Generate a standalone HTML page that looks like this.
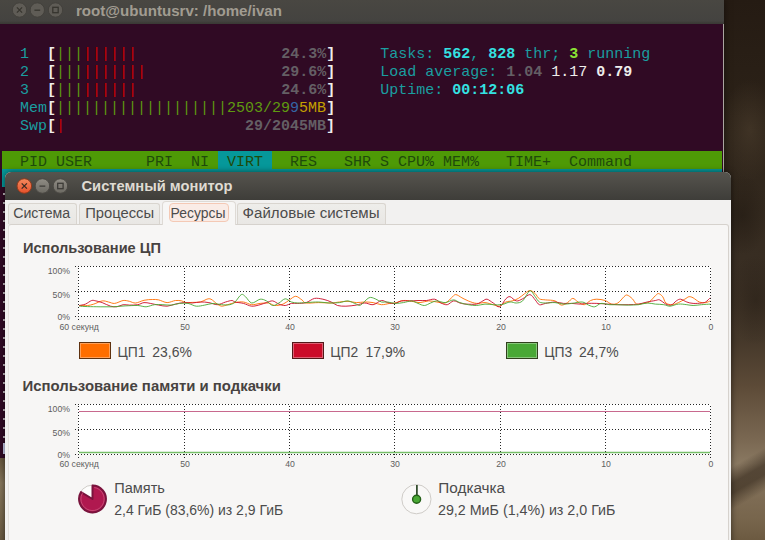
<!DOCTYPE html>
<html lang="ru">
<head>
<meta charset="utf-8">
<title>Системный монитор</title>
<style>
html,body{margin:0;padding:0;}
body{width:765px;height:540px;overflow:hidden;position:relative;font-family:"Liberation Sans",sans-serif;
 background:
  linear-gradient(150deg,transparent 0,transparent 90.6%,rgba(50,38,26,.6) 92.3%,rgba(50,38,26,.6) 93.3%,transparent 95%,transparent 100%),
  radial-gradient(30px 50px at 750px 130px,rgba(85,70,52,.45),transparent),
  radial-gradient(26px 40px at 742px 215px,rgba(30,22,15,.5),transparent),
  radial-gradient(30px 45px at 756px 300px,rgba(30,22,15,.4),transparent),
  linear-gradient(180deg,#251b13 0px,#2c2218 120px,#33291e 200px,#392e23 270px,#45382a 340px,#5c4a37 385px,#7a6852 440px,#8a7962 464px,#7d6b53 500px,#77654c 520px,#6c5a41 540px);}
.abs{position:absolute;}
/* ---------- terminal ---------- */
#term{left:0;top:0;width:724px;height:458px;background:#300a24;box-shadow:0 0 7px rgba(0,0,0,.5);}
#ttitle{left:0;top:0;width:724px;height:24px;background:linear-gradient(180deg,#494742 0,#444340 21px,#3b3a36 23px,#3b3a36 24px);}
#ttitle .tt{left:76px;top:2px;font-size:15.1px;font-weight:bold;color:#a19c91;line-height:18px;white-space:nowrap;}
.row{left:2px;height:18px;line-height:24px;font-family:"Liberation Mono",monospace;font-size:15px;white-space:pre;color:#d3d7cf;}
.c{color:#1a9ea0}.C{color:#34e2e2;font-weight:bold}.w{color:#eeeeec;font-weight:bold}.g{color:#5f9a10}.r{color:#cc0000}
.k{color:#645f64;font-weight:bold}.G{color:#8ae234;font-weight:bold}.b{color:#3465a4}.y{color:#c4a000}
.W{color:#eeeeec}
#tdots{left:3px;top:193px;width:2px;height:246px;background:repeating-linear-gradient(180deg,rgba(238,238,236,.75) 0,rgba(238,238,236,.75) 1.6px,transparent 1.6px,transparent 9px);}
#tf1{left:3px;top:443px;width:2px;height:11px;background:#c9cdea;}
#tedge{left:722.5px;top:24px;width:1px;height:149px;background:#aaa6a0;}
/* ---------- system monitor ---------- */
#sm{left:5px;top:172px;width:726px;height:380px;background:#f2f1f0;border-radius:6px 6px 0 0;overflow:hidden;box-shadow:0 0 6px rgba(0,0,0,.55);}
#smt{left:0;top:0;width:726px;height:28px;background:linear-gradient(180deg,#56544e 0,#3e3d39 100%);}
#smt .tt{left:76.5px;top:5px;font-size:14.7px;font-weight:bold;color:#dfdbd2;line-height:18px;white-space:nowrap;}
.ui{color:#4c4c4c;white-space:nowrap;line-height:20px;height:20px;}
#smi{left:-5px;top:-172px;width:765px;height:552px;}
.tab{box-sizing:border-box;border:1px solid #d9d5cf;border-bottom:none;border-radius:3px 3px 0 0;background:linear-gradient(180deg,#eeedea 0,#e9e7e4 100%);}
#pane{left:8px;top:224px;width:721px;height:330px;box-sizing:border-box;border:1px solid #d6d2cd;border-left-color:#e4e1dd;border-radius:3px;background:#f7f6f5;}
#atab{left:162px;top:201px;width:74px;height:24px;box-sizing:border-box;border:1px solid #dedad5;border-bottom:none;border-radius:4px 4px 0 0;background:#f7f6f5;}
#focus{left:169px;top:203px;width:60px;height:19px;box-sizing:border-box;border:1px solid #f4c9b5;border-radius:4px;background:#faece6;}
.sw{width:32px;height:17px;box-sizing:border-box;border:1px solid rgba(40,30,20,.75);box-shadow:inset 0 0 0 1px rgba(255,255,255,.35);}
</style>
</head>
<body>
<div id="term" class="abs">
 <div id="ttitle" class="abs">
  <svg class="abs" style="left:0;top:0" width="80" height="24" viewBox="0 0 80 24">
   <g fill="#5f5c56" stroke="#43413c" stroke-width="1"><circle cx="19.5" cy="10" r="7.2"/><circle cx="37.3" cy="10" r="7.2"/><circle cx="55.5" cy="10" r="7.2"/></g>
   <g fill="none" stroke="#37352f" stroke-width="1.3"><path d="M16.9 7.4L22.1 12.6M22.1 7.4L16.9 12.6"/><path d="M34.4 10.2H40.2"/><rect x="52.8" y="7.3" width="5.4" height="5.4"/></g>
  </svg>
  <div class="abs tt">root@ubuntusrv: /home/ivan</div>
 </div>
 <div class="abs row" style="top:43px;">  <span class="c">1</span>  <span class="w">[</span><span class="g br">|||</span><span class="r br">||||||</span>                <span class="k">24.3%</span><span class="w">]</span>     <span class="c">Tasks: </span><span class="C">562</span><span class="c">, </span><span class="C">828</span><span class="c"> thr; </span><span class="G">3</span><span class="c"> running</span></div>
 <div class="abs row" style="top:61px;">  <span class="c">2</span>  <span class="w">[</span><span class="g br">|||</span><span class="r br">|||||||</span>               <span class="k">29.6%</span><span class="w">]</span>     <span class="c">Load average: </span><span class="k">1.04</span> <span class="W">1.17</span> <span class="w">0.79</span></div>
 <div class="abs row" style="top:79px;">  <span class="c">3</span>  <span class="w">[</span><span class="g br">|||</span><span class="r br">||||||</span>                <span class="k">24.6%</span><span class="w">]</span>     <span class="c">Uptime: </span><span class="C">00:12:06</span></div>
 <div class="abs row" style="top:97px;">  <span class="c">Mem</span><span class="w">[</span><span class="g br">|||||||||||||||||||</span><span class="g">2503/29</span><span class="b">9</span><span class="y">5MB</span><span class="w">]</span></div>
 <div class="abs row" style="top:115px;">  <span class="c">Swp</span><span class="w">[</span><span class="r br">|</span>                    <span class="k">29/2045MB</span><span class="w">]</span></div>
 <div class="abs" style="left:2px;top:151px;width:720px;height:18px;background:#4e9a06"></div><div class="abs" style="left:218px;top:151px;width:54px;height:18px;background:#06989a"></div>
 <div class="abs row" style="top:151px;color:#1f4a0b;">  PID USER      PRI  NI  VIRT   RES   SHR S CPU% MEM%   TIME+  Command</div>
 <div class="abs" style="left:2px;top:169px;width:720px;height:18px;background:#06989a"></div>
 <div class="abs" id="tdots"></div><div class="abs" id="tf1"></div>
 <div class="abs" id="tedge"></div>
</div>
<div class="abs" style="left:0;top:458px;width:8px;height:82px;background:linear-gradient(180deg,#66553c 0,#85755a 25px,#7b6b50 50px,#6a5a42 82px)"></div>
<div id="sm" class="abs">
 <div id="smt" class="abs">
  <svg class="abs" style="left:0;top:0" width="80" height="28" viewBox="0 0 80 28">
   <defs><linearGradient id="gc" x1="0" y1="0" x2="0" y2="1"><stop offset="0" stop-color="#f58a5e"/><stop offset="1" stop-color="#e6502a"/></linearGradient>
   <linearGradient id="gg" x1="0" y1="0" x2="0" y2="1"><stop offset="0" stop-color="#908d85"/><stop offset="1" stop-color="#6b6962"/></linearGradient></defs>
   <circle cx="19.3" cy="14" r="7.3" fill="url(#gc)" stroke="#8f3a1c" stroke-width="1"/>
   <circle cx="37.4" cy="14" r="7.3" fill="url(#gg)" stroke="#4a4843" stroke-width="1"/>
   <circle cx="55.4" cy="14" r="7.3" fill="url(#gg)" stroke="#4a4843" stroke-width="1"/>
   <g fill="none" stroke="#3b2a22" stroke-width="1.3"><path d="M16.7 11.4L21.9 16.6M21.9 11.4L16.7 16.6"/></g>
   <g fill="none" stroke="#3c3b37" stroke-width="1.3"><path d="M34.5 14.2H40.3"/><rect x="52.7" y="11.3" width="5.4" height="5.4"/></g>
  </svg>
  <div class="abs tt">Системный монитор</div></div>
<div class="abs" id="smi">
<div class="abs tab" style="left:8px;top:203px;width:69px;height:21px"></div>
<div class="abs tab" style="left:79px;top:203px;width:81px;height:21px"></div>
<div class="abs tab" style="left:237px;top:203px;width:149px;height:21px"></div>
<div class="abs" id="pane"></div>
<div class="abs" id="atab"></div>
<div class="abs" id="focus"></div>
<div class="abs ui" style="left:13.2px;top:203.3px;font-size:14.15px;">Система</div>
<div class="abs ui" style="left:85.2px;top:203.3px;font-size:14.78px;">Процессы</div>
<div class="abs ui" style="left:170.5px;top:203.3px;font-size:13.95px;">Ресурсы</div>
<div class="abs ui" style="left:242.6px;top:203.3px;font-size:15.09px;">Файловые системы</div>
<div class="abs ui" style="left:23px;top:238px;font-size:14.59px;font-weight:bold;color:#474341;">Использование ЦП</div>
<div class="abs ui" style="left:22.5px;top:376px;font-size:14.92px;font-weight:bold;color:#474341;">Использование памяти и подкачки</div>
<svg class="abs" style="left:0;top:0" width="765" height="540" viewBox="0 0 765 540">
<style>.dt{stroke:#262626;stroke-width:1;stroke-dasharray:1 2;shape-rendering:crispEdges}.ax{font-family:"Liberation Sans",sans-serif;font-size:8.7px;fill:#5e5e5e}.ln{fill:none;stroke-width:1;stroke-linejoin:round;stroke-opacity:.9}</style>
<rect x="78" y="266.0" width="633" height="50.5" fill="#fff"/><line x1="75" y1="266.5" x2="711" y2="266.5" class="dt"/><line x1="75" y1="291.5" x2="711" y2="291.5" class="dt"/><line x1="75" y1="316.5" x2="711" y2="316.5" class="dt"/><line x1="78.5" y1="320.0" x2="78.5" y2="266.0" class="dt"/><line x1="184.5" y1="320.0" x2="184.5" y2="266.0" class="dt"/><line x1="289.5" y1="320.0" x2="289.5" y2="266.0" class="dt"/><line x1="394.5" y1="320.0" x2="394.5" y2="266.0" class="dt"/><line x1="500.5" y1="320.0" x2="500.5" y2="266.0" class="dt"/><line x1="605.5" y1="320.0" x2="605.5" y2="266.0" class="dt"/><line x1="710.5" y1="320.0" x2="710.5" y2="266.0" class="dt"/>
<path class="ln" stroke="#ff6e00" d="M79.2 305.5C80.6 305.5 85.1 305.8 87.6 305.5C90.0 305.3 91.4 304.8 93.8 304.1C96.3 303.3 99.8 301.3 102.2 300.9C104.6 300.6 106.4 301.5 108.5 302.0C110.6 302.4 112.3 303.7 114.7 303.4C117.2 303.2 120.7 300.9 123.1 300.5C125.6 300.2 127.3 300.9 129.4 301.3C131.5 301.8 133.2 303.2 135.7 303.0C138.1 302.8 141.2 300.9 144.0 300.3C146.8 299.7 150.0 299.5 152.4 299.5C154.8 299.4 156.2 299.4 158.7 299.9C161.1 300.4 164.3 302.5 167.1 302.6C169.8 302.7 173.0 300.8 175.4 300.5C177.9 300.2 180.0 300.6 181.7 300.9C183.4 301.3 184.1 302.4 185.9 302.6C187.6 302.8 189.7 302.5 192.2 302.4C194.6 302.3 198.1 302.5 200.5 302.0C203.0 301.4 205.1 299.7 206.8 299.2C208.5 298.8 209.2 298.4 211.0 299.2C212.7 300.0 215.5 302.9 217.3 304.1C219.0 305.2 219.7 306.0 221.4 306.2C223.2 306.3 225.5 305.3 227.7 304.7C230.0 304.1 232.4 303.0 235.0 302.6C237.6 302.1 240.6 301.6 243.4 302.0C246.2 302.3 248.9 304.4 251.7 304.7C254.5 304.9 257.3 303.7 260.1 303.4C262.9 303.2 266.0 302.7 268.5 303.0C270.9 303.4 272.3 305.3 274.7 305.5C277.2 305.7 280.7 305.0 283.1 304.1C285.6 303.1 287.3 301.2 289.4 299.9C291.5 298.6 293.6 296.3 295.7 296.3C297.8 296.3 300.2 298.8 301.9 299.9C303.7 301.0 303.3 302.6 306.1 303.0C308.9 303.5 314.5 302.6 318.7 302.6C322.9 302.6 327.7 303.1 331.2 303.0C334.7 302.9 336.8 302.2 339.6 302.0C342.4 301.7 345.2 301.2 348.0 301.3C350.8 301.4 353.5 302.5 356.3 302.6C359.1 302.7 361.9 302.0 364.7 302.0C367.5 302.0 370.3 302.1 373.1 302.6C375.9 303.0 378.7 304.5 381.4 304.7C384.2 304.8 387.6 303.7 389.8 303.4C392.1 303.2 392.7 303.5 395.0 303.0C397.3 302.5 400.6 300.8 403.4 300.5C406.2 300.2 408.9 301.0 411.7 301.3C414.5 301.7 417.3 302.7 420.1 302.6C422.9 302.5 425.7 301.0 428.5 300.9C431.3 300.8 434.1 301.6 436.8 302.0C439.6 302.3 442.8 303.7 445.2 303.0C447.6 302.3 449.7 299.2 451.5 297.8C453.2 296.4 453.9 294.6 455.7 294.6C457.4 294.6 459.9 296.7 461.9 297.8C464.0 298.8 465.8 300.0 468.2 300.9C470.7 301.9 473.8 303.2 476.6 303.4C479.4 303.7 482.2 302.4 485.0 302.6C487.7 302.8 490.9 304.1 493.3 304.7C495.8 305.3 497.5 306.6 499.6 306.2C501.7 305.7 503.8 302.8 505.9 302.0C508.0 301.1 510.1 301.5 512.2 300.9C514.2 300.3 516.3 299.6 518.4 298.4C520.5 297.2 522.8 294.9 524.7 293.6C526.6 292.3 528.2 290.5 529.9 290.5C531.7 290.5 533.6 292.2 535.2 293.6C536.7 295.0 537.6 297.8 539.4 298.8C541.1 299.9 543.0 299.5 545.6 299.9C548.2 300.2 552.4 300.0 555.0 300.9C557.6 301.8 559.2 304.8 561.3 305.1C563.4 305.4 565.6 303.7 567.6 302.6C569.5 301.5 571.0 298.5 572.8 298.4C574.5 298.3 576.1 300.9 578.0 302.0C579.9 303.0 582.2 304.9 584.3 304.7C586.4 304.4 588.5 301.4 590.6 300.5C592.7 299.6 594.4 299.2 596.8 299.2C599.3 299.2 602.8 299.7 605.2 300.5C607.6 301.3 609.4 303.6 611.5 304.1C613.6 304.5 615.7 304.2 617.8 303.0C619.9 301.8 622.5 298.1 624.0 296.7C625.6 295.4 625.8 294.7 627.2 295.1C628.6 295.4 630.8 297.3 632.4 298.8C634.0 300.3 634.8 303.3 636.6 304.1C638.3 304.8 640.8 303.8 642.9 303.4C645.0 303.1 647.1 303.3 649.1 302.0C651.2 300.7 653.8 297.1 655.4 295.7C657.0 294.3 657.3 293.4 658.6 293.6C659.8 293.8 661.5 295.2 662.7 296.7C664.0 298.3 664.3 301.7 665.9 303.0C667.4 304.3 670.1 304.8 672.2 304.7C674.2 304.6 676.3 303.5 678.4 302.6C680.5 301.7 683.0 300.2 684.7 299.2C686.5 298.3 687.5 297.0 688.9 296.7C690.3 296.5 691.3 296.9 693.1 297.8C694.8 298.7 697.3 301.2 699.4 302.0C701.4 302.8 703.8 302.8 705.6 302.6C707.4 302.4 709.5 301.2 710.2 300.9"/>
<path class="ln" stroke="#cb0c29" d="M79.2 305.5C80.2 305.3 83.4 304.9 85.5 304.1C87.6 303.2 90.0 301.0 91.7 300.5C93.5 300.0 94.2 300.6 95.9 300.9C97.7 301.3 99.8 301.7 102.2 302.6C104.6 303.5 108.1 305.5 110.6 306.2C113.0 306.8 114.7 307.0 116.8 306.8C118.9 306.5 121.0 305.0 123.1 304.7C125.2 304.4 127.0 305.1 129.4 305.1C131.8 305.1 135.3 305.1 137.8 304.7C140.2 304.3 141.9 302.8 144.0 302.6C146.1 302.4 147.9 303.0 150.3 303.4C152.8 303.8 155.9 304.7 158.7 305.1C161.5 305.6 164.3 306.3 167.1 306.2C169.8 306.0 172.6 304.7 175.4 304.1C178.2 303.5 181.0 302.8 183.8 302.6C186.6 302.4 189.4 303.1 192.2 303.0C194.9 302.9 197.7 302.0 200.5 302.0C203.3 301.9 206.1 302.1 208.9 302.6C211.7 303.0 214.5 304.8 217.3 304.7C220.0 304.6 223.2 302.7 225.6 302.0C228.1 301.3 230.3 300.5 231.9 300.5C233.5 300.5 233.1 301.5 235.0 302.0C236.9 302.5 240.6 302.7 243.4 303.4C246.2 304.1 248.9 305.9 251.7 306.2C254.5 306.4 257.7 305.3 260.1 304.7C262.5 304.1 264.3 303.2 266.4 302.6C268.5 302.0 270.6 300.7 272.7 300.9C274.7 301.2 276.8 303.3 278.9 304.1C281.0 304.8 283.1 305.6 285.2 305.5C287.3 305.4 289.4 303.8 291.5 303.4C293.6 303.1 295.3 303.6 297.8 303.4C300.2 303.3 303.3 303.4 306.1 302.6C308.9 301.8 311.7 299.0 314.5 298.4C317.3 297.9 320.1 298.7 322.9 299.2C325.7 299.8 328.8 300.9 331.2 302.0C333.7 303.0 335.1 304.8 337.5 305.5C340.0 306.2 342.7 306.2 345.9 306.2C349.0 306.1 353.2 305.6 356.3 305.1C359.5 304.6 361.9 303.1 364.7 303.0C367.5 302.9 370.3 305.1 373.1 304.7C375.9 304.3 379.0 300.9 381.4 300.5C383.9 300.2 385.5 302.1 387.7 302.6C390.0 303.1 392.7 303.7 395.0 303.4C397.3 303.2 398.8 301.3 401.3 300.9C403.7 300.5 406.9 301.0 409.6 300.9C412.4 300.9 415.2 300.6 418.0 300.5C420.8 300.4 423.6 300.7 426.4 300.5C429.2 300.3 432.3 298.8 434.7 299.2C437.2 299.7 438.9 302.1 441.0 303.0C443.1 303.9 445.2 305.0 447.3 304.7C449.4 304.3 451.5 301.2 453.6 300.9C455.7 300.6 457.8 302.5 459.9 303.0C461.9 303.5 463.3 303.9 466.1 304.1C468.9 304.2 473.8 304.6 476.6 304.1C479.4 303.5 481.1 301.7 482.9 300.9C484.6 300.1 485.3 298.9 487.1 299.2C488.8 299.6 491.2 301.8 493.3 303.0C495.4 304.3 497.5 307.5 499.6 306.8C501.7 306.1 504.1 300.5 505.9 298.8C507.6 297.2 508.3 296.4 510.1 296.7C511.8 297.1 514.2 300.6 516.3 300.9C518.4 301.3 520.3 299.9 522.6 298.8C524.9 297.8 527.8 294.5 529.9 294.6C532.0 294.8 533.6 298.2 535.2 299.9C536.7 301.5 537.6 304.1 539.4 304.7C541.1 305.3 543.0 303.9 545.6 303.4C548.2 303.0 552.0 302.0 555.0 302.0C558.0 302.0 560.6 303.2 563.4 303.4C566.2 303.7 568.9 303.3 571.7 303.4C574.5 303.5 577.7 304.1 580.1 304.1C582.5 304.1 583.6 303.5 586.4 303.4C589.2 303.3 593.4 303.3 596.8 303.4C600.3 303.5 603.8 303.8 607.3 304.1C610.8 304.3 614.3 304.6 617.8 304.7C621.2 304.8 624.7 304.8 628.2 304.7C631.7 304.6 635.5 304.5 638.7 304.1C641.8 303.6 644.3 302.6 647.1 302.0C649.8 301.4 653.3 300.9 655.4 300.5C657.5 300.2 657.9 299.3 659.6 299.9C661.3 300.5 664.0 303.2 665.9 304.1C667.8 304.9 669.4 305.6 671.1 305.1C672.9 304.6 674.8 301.9 676.3 300.9C677.9 299.9 678.8 299.1 680.5 299.2C682.3 299.4 684.7 301.3 686.8 302.0C688.9 302.7 690.6 303.3 693.1 303.4C695.5 303.6 699.4 303.3 701.4 303.0C703.5 302.8 704.2 302.8 705.6 302.0C707.1 301.1 709.5 298.5 710.2 297.8"/>
<path class="ln" stroke="#49a835" d="M79.2 306.2C80.6 306.2 84.1 306.5 87.6 306.6C91.0 306.7 95.9 306.7 100.1 306.8C104.3 306.8 108.5 306.9 112.7 306.8C116.8 306.6 121.0 306.2 125.2 305.9C129.4 305.7 134.3 305.4 137.8 305.5C141.2 305.7 143.3 306.9 146.1 306.8C148.9 306.6 151.7 305.0 154.5 304.7C157.3 304.3 160.1 304.6 162.9 304.7C165.7 304.8 168.4 305.3 171.2 305.1C174.0 304.9 176.8 303.7 179.6 303.4C182.4 303.2 185.2 303.0 188.0 303.4C190.8 303.9 193.5 305.9 196.3 306.2C199.1 306.4 201.9 305.6 204.7 305.1C207.5 304.7 210.3 303.5 213.1 303.4C215.9 303.4 218.7 304.5 221.4 304.7C224.2 304.9 227.6 305.1 229.8 304.7C232.1 304.2 233.1 303.6 235.0 302.0C236.9 300.3 239.5 295.5 241.3 294.6C243.0 293.8 243.7 295.3 245.5 296.7C247.2 298.1 249.3 302.6 251.7 303.0C254.2 303.4 257.7 299.6 260.1 299.2C262.5 298.9 264.3 299.9 266.4 300.9C268.5 302.0 270.6 305.2 272.7 305.5C274.7 305.9 276.8 304.1 278.9 303.0C281.0 301.9 283.1 299.0 285.2 298.8C287.3 298.7 289.4 301.3 291.5 302.0C293.6 302.7 295.3 302.9 297.8 303.0C300.2 303.1 302.6 302.8 306.1 302.6C309.6 302.4 314.8 301.9 318.7 302.0C322.5 302.0 325.7 302.9 329.1 303.0C332.6 303.1 336.5 302.9 339.6 302.6C342.7 302.2 345.2 300.7 348.0 300.9C350.8 301.2 354.2 303.4 356.3 304.1C358.4 304.8 358.4 306.2 360.5 305.1C362.6 304.1 366.5 298.8 368.9 297.8C371.3 296.7 373.1 298.1 375.2 298.8C377.3 299.5 379.4 301.4 381.4 302.0C383.5 302.5 385.5 301.7 387.7 302.0C390.0 302.2 392.4 303.3 395.0 303.4C397.6 303.5 400.6 303.0 403.4 302.6C406.2 302.2 409.3 300.8 411.7 300.9C414.2 301.1 415.9 302.7 418.0 303.4C420.1 304.2 422.2 305.6 424.3 305.5C426.4 305.5 428.5 303.8 430.6 303.0C432.7 302.2 434.4 301.0 436.8 300.9C439.3 300.9 442.4 302.8 445.2 302.6C448.0 302.4 451.1 299.9 453.6 299.9C456.0 299.9 457.4 301.8 459.9 302.6C462.3 303.4 465.4 304.2 468.2 304.7C471.0 305.2 473.8 305.6 476.6 305.5C479.4 305.4 482.2 304.2 485.0 304.1C487.7 303.9 490.5 304.6 493.3 304.7C496.1 304.8 498.9 305.1 501.7 304.7C504.5 304.2 507.6 302.2 510.1 302.0C512.5 301.7 514.2 303.2 516.3 303.0C518.4 302.8 520.3 302.9 522.6 300.9C524.9 298.9 527.8 291.6 529.9 290.9C532.0 290.2 533.6 294.9 535.2 296.7C536.7 298.6 537.6 300.9 539.4 302.0C541.1 303.0 543.0 302.9 545.6 303.0C548.2 303.1 552.0 302.4 555.0 302.6C558.0 302.8 560.6 303.9 563.4 304.1C566.2 304.2 568.6 303.8 571.7 303.4C574.9 303.1 579.4 301.7 582.2 302.0C585.0 302.2 586.4 304.3 588.5 305.1C590.6 305.9 592.7 307.1 594.7 306.8C596.8 306.5 598.6 303.8 601.0 303.4C603.5 303.1 606.6 304.5 609.4 304.7C612.2 304.9 614.6 304.6 617.8 304.7C620.9 304.8 624.7 305.1 628.2 305.1C631.7 305.1 635.5 305.0 638.7 304.7C641.8 304.3 644.3 303.1 647.1 303.0C649.8 302.9 652.6 303.8 655.4 304.1C658.2 304.3 661.3 304.3 663.8 304.7C666.2 305.0 667.6 306.3 670.1 306.2C672.5 306.0 675.6 304.3 678.4 304.1C681.2 303.8 684.4 304.4 686.8 304.7C689.2 304.9 690.6 305.5 693.1 305.5C695.5 305.5 698.6 304.9 701.4 304.7C704.3 304.4 708.8 304.2 710.2 304.1"/>
<text x="70" y="273.9" text-anchor="end" class="ax">100%</text><text x="70" y="297.8" text-anchor="end" class="ax">50%</text><text x="70" y="319.7" text-anchor="end" class="ax">0%</text><text x="59.5" y="329.7" class="ax">60 секунд</text><text x="185.0" y="329.7" text-anchor="middle" class="ax">50</text><text x="290.0" y="329.7" text-anchor="middle" class="ax">40</text><text x="395.0" y="329.7" text-anchor="middle" class="ax">30</text><text x="501.0" y="329.7" text-anchor="middle" class="ax">20</text><text x="606.0" y="329.7" text-anchor="middle" class="ax">10</text><text x="711.0" y="329.7" text-anchor="middle" class="ax">0</text>
<rect x="78" y="404.0" width="633" height="50.5" fill="#fff"/><line x1="75" y1="404.5" x2="711" y2="404.5" class="dt"/><line x1="75" y1="429.5" x2="711" y2="429.5" class="dt"/><line x1="75" y1="454.5" x2="711" y2="454.5" class="dt"/><line x1="78.5" y1="458.0" x2="78.5" y2="404.0" class="dt"/><line x1="184.5" y1="458.0" x2="184.5" y2="404.0" class="dt"/><line x1="289.5" y1="458.0" x2="289.5" y2="404.0" class="dt"/><line x1="394.5" y1="458.0" x2="394.5" y2="404.0" class="dt"/><line x1="500.5" y1="458.0" x2="500.5" y2="404.0" class="dt"/><line x1="605.5" y1="458.0" x2="605.5" y2="404.0" class="dt"/><line x1="710.5" y1="458.0" x2="710.5" y2="404.0" class="dt"/>
<line x1="79" y1="411.5" x2="710" y2="411.5" stroke="#ab1852" stroke-opacity=".65" stroke-width="1.2"/>
<line x1="79" y1="452.5" x2="710" y2="452.5" stroke="#49a835" stroke-opacity=".75" stroke-width="1.4"/>
<text x="70" y="411.9" text-anchor="end" class="ax">100%</text><text x="70" y="435.8" text-anchor="end" class="ax">50%</text><text x="70" y="457.7" text-anchor="end" class="ax">0%</text><text x="59.5" y="466.8" class="ax">60 секунд</text><text x="185.0" y="466.8" text-anchor="middle" class="ax">50</text><text x="290.0" y="466.8" text-anchor="middle" class="ax">40</text><text x="395.0" y="466.8" text-anchor="middle" class="ax">30</text><text x="501.0" y="466.8" text-anchor="middle" class="ax">20</text><text x="606.0" y="466.8" text-anchor="middle" class="ax">10</text><text x="711.0" y="466.8" text-anchor="middle" class="ax">0</text>
<!-- memory pie -->
<circle cx="92.5" cy="499.0" r="13.9" fill="#fdfdfc" stroke="#cfccc8" stroke-width="1"/>
<path d="M92.5 499.0 L92.5 485.6 A13.4 13.4 0 1 1 81.01 492.11 Z" fill="#b0184f" stroke="#7a133d" stroke-width="2" stroke-linejoin="round"/>
<path d="M94.3 487.50 A11.6 11.6 0 1 1 83.34 491.88" fill="none" stroke="#e07a9c" stroke-opacity=".5" stroke-width="1"/>
<!-- swap pie -->
<circle cx="416.4" cy="499.2" r="14.6" fill="#f9f8f7" stroke="#cfccc8" stroke-width="1"/>
<line x1="416.9" y1="499" x2="416.9" y2="485" stroke="#1d3a17" stroke-width="1.6"/>
<circle cx="416.6" cy="499.3" r="4" fill="#49a835" stroke="#245f18" stroke-width="1.4"/>
</svg>
<div class="abs sw" style="left:79px;top:342px;background:#ff6e00"></div>
<div class="abs ui" style="left:117.5px;top:341.8px;font-size:13.9px;">ЦП1</div>
<div class="abs ui" style="left:152.3px;top:341.8px;font-size:13.95px;">23,6%</div>
<div class="abs sw" style="left:292px;top:342px;background:#cb0c29"></div>
<div class="abs ui" style="left:330.2px;top:341.8px;font-size:13.9px;">ЦП2</div>
<div class="abs ui" style="left:365.5px;top:341.8px;font-size:13.95px;">17,9%</div>
<div class="abs sw" style="left:506px;top:342px;background:#49a835"></div>
<div class="abs ui" style="left:544.3px;top:341.8px;font-size:13.9px;">ЦП3</div>
<div class="abs ui" style="left:579.1px;top:341.8px;font-size:13.95px;">24,7%</div>
<div class="abs ui" style="left:114.3px;top:477.5px;font-size:14.53px;">Память</div>
<div class="abs ui" style="left:114.3px;top:500.4px;font-size:13.98px;">2,4 ГиБ (83,6%) из 2,9 ГиБ</div>
<div class="abs ui" style="left:438.3px;top:477.5px;font-size:15.3px;">Подкачка</div>
<div class="abs ui" style="left:438px;top:500.4px;font-size:14.27px;">29,2 МиБ (1,4%) из 2,0 ГиБ</div>
</div></div>
</body>
</html>
